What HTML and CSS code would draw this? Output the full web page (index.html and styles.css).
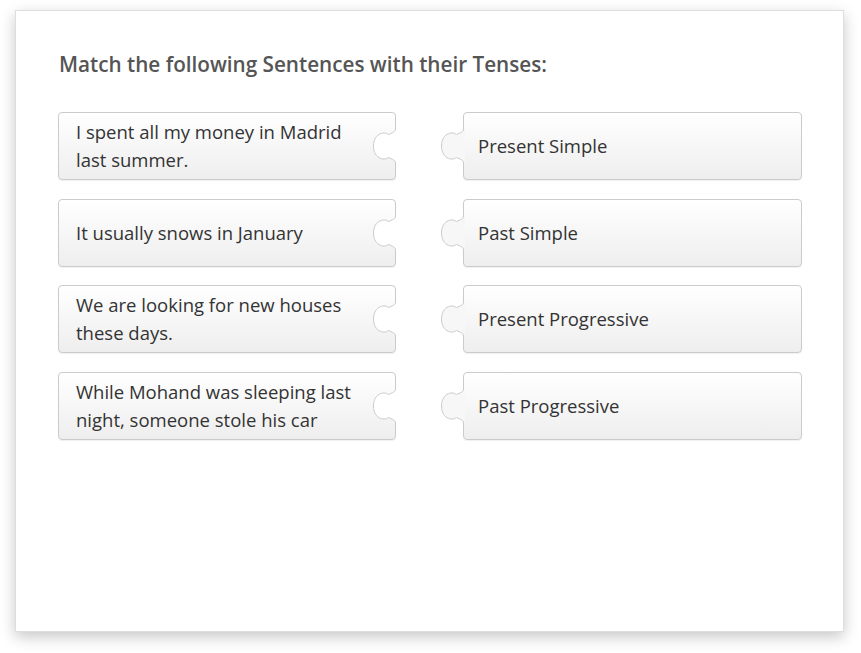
FILE: index.html
```html
<!DOCTYPE html>
<html lang="en">
<head>
<meta charset="utf-8">
<title>Match</title>
<link rel="stylesheet" href="styles.css">
</head>
<body>
<div class="frame">
  <h1 class="title">Match the following Sentences with their Tenses:</h1>
  <div class="grid">
    <div class="piece left"><span>I spent all my money in Madrid last summer.</span>
      <svg class="notch" width="24" height="40" viewBox="-23.5 -20 24 40"><path class="cut" d="M0,-17 C0,-13 -6,-13 -7,-11 C-9,-15 -22,-14 -22,0 C-22,14 -9,15 -7,11 C-6,13 0,13 0,17 L1,17 L1,-17 Z"/><path class="edge" d="M0,-17 C0,-13 -6,-13 -7,-11 C-9,-15 -22,-14 -22,0 C-22,14 -9,15 -7,11 C-6,13 0,13 0,17"/></svg>
    </div>
    <div class="piece right"><span>Present Simple</span>
      <svg class="tab" width="24" height="40" viewBox="-22.5 -20 24 40"><path class="fill" d="M0,-17 C0,-13 -6,-13 -7,-11 C-9,-15 -22,-14 -22,0 C-22,14 -9,15 -7,11 C-6,13 0,13 0,17 L1.5,17 L1.5,-17 Z"/><path class="edge" d="M0,-17 C0,-13 -6,-13 -7,-11 C-9,-15 -22,-14 -22,0 C-22,14 -9,15 -7,11 C-6,13 0,13 0,17"/></svg>
    </div>

    <div class="piece left"><span>It usually snows in January</span>
      <svg class="notch" width="24" height="40" viewBox="-23.5 -20 24 40"><path class="cut" d="M0,-17 C0,-13 -6,-13 -7,-11 C-9,-15 -22,-14 -22,0 C-22,14 -9,15 -7,11 C-6,13 0,13 0,17 L1,17 L1,-17 Z"/><path class="edge" d="M0,-17 C0,-13 -6,-13 -7,-11 C-9,-15 -22,-14 -22,0 C-22,14 -9,15 -7,11 C-6,13 0,13 0,17"/></svg>
    </div>
    <div class="piece right"><span>Past Simple</span>
      <svg class="tab" width="24" height="40" viewBox="-22.5 -20 24 40"><path class="fill" d="M0,-17 C0,-13 -6,-13 -7,-11 C-9,-15 -22,-14 -22,0 C-22,14 -9,15 -7,11 C-6,13 0,13 0,17 L1.5,17 L1.5,-17 Z"/><path class="edge" d="M0,-17 C0,-13 -6,-13 -7,-11 C-9,-15 -22,-14 -22,0 C-22,14 -9,15 -7,11 C-6,13 0,13 0,17"/></svg>
    </div>

    <div class="piece left"><span>We are looking for new houses these days.</span>
      <svg class="notch" width="24" height="40" viewBox="-23.5 -20 24 40"><path class="cut" d="M0,-17 C0,-13 -6,-13 -7,-11 C-9,-15 -22,-14 -22,0 C-22,14 -9,15 -7,11 C-6,13 0,13 0,17 L1,17 L1,-17 Z"/><path class="edge" d="M0,-17 C0,-13 -6,-13 -7,-11 C-9,-15 -22,-14 -22,0 C-22,14 -9,15 -7,11 C-6,13 0,13 0,17"/></svg>
    </div>
    <div class="piece right"><span>Present Progressive</span>
      <svg class="tab" width="24" height="40" viewBox="-22.5 -20 24 40"><path class="fill" d="M0,-17 C0,-13 -6,-13 -7,-11 C-9,-15 -22,-14 -22,0 C-22,14 -9,15 -7,11 C-6,13 0,13 0,17 L1.5,17 L1.5,-17 Z"/><path class="edge" d="M0,-17 C0,-13 -6,-13 -7,-11 C-9,-15 -22,-14 -22,0 C-22,14 -9,15 -7,11 C-6,13 0,13 0,17"/></svg>
    </div>

    <div class="piece left"><span>While Mohand was sleeping last night, someone stole his car</span>
      <svg class="notch" width="24" height="40" viewBox="-23.5 -20 24 40"><path class="cut" d="M0,-17 C0,-13 -6,-13 -7,-11 C-9,-15 -22,-14 -22,0 C-22,14 -9,15 -7,11 C-6,13 0,13 0,17 L1,17 L1,-17 Z"/><path class="edge" d="M0,-17 C0,-13 -6,-13 -7,-11 C-9,-15 -22,-14 -22,0 C-22,14 -9,15 -7,11 C-6,13 0,13 0,17"/></svg>
    </div>
    <div class="piece right"><span>Past Progressive</span>
      <svg class="tab" width="24" height="40" viewBox="-22.5 -20 24 40"><path class="fill" d="M0,-17 C0,-13 -6,-13 -7,-11 C-9,-15 -22,-14 -22,0 C-22,14 -9,15 -7,11 C-6,13 0,13 0,17 L1.5,17 L1.5,-17 Z"/><path class="edge" d="M0,-17 C0,-13 -6,-13 -7,-11 C-9,-15 -22,-14 -22,0 C-22,14 -9,15 -7,11 C-6,13 0,13 0,17"/></svg>
    </div>
  </div>
</div>
</body>
</html>
```

FILE: styles.css
```css
html, body {
  margin: 0;
  padding: 0;
  background: #ffffff;
}
body {
  padding: 10px 17px 21px 15px;
  font-family: "Open Sans", "DejaVu Sans", sans-serif;
}
.frame {
  box-sizing: border-box;
  width: 829px;
  height: 622px;
  background: #ffffff;
  border: 1px solid #dedede;
  box-shadow: 0 5px 14px rgba(0, 0, 0, 0.22);
  padding: 39px 0 0 41px;
}
.title {
  margin: 0 0 34px 2px;
  font-size: 20.7px;
  line-height: 28px;
  font-weight: 600;
  color: #555555;
}
.grid {
  display: grid;
  grid-template-columns: 338px 339px;
  column-gap: 67px;
  row-gap: 18.67px;
  margin-left: 1px;
}
.piece {
  position: relative;
  box-sizing: border-box;
  height: 68px;
  border: 1px solid #cbcbcb;
  border-radius: 4px;
  background: linear-gradient(#ffffff, #eeeeee);
  box-shadow: 0 1px 1px rgba(0, 0, 0, 0.06);
  display: flex;
  align-items: center;
  font-size: 18.5px;
  line-height: 28px;
  color: #333333;
}
.piece.left {
  padding: 0 36px 0 17px;
}
.piece.right {
  padding: 0 20px 0 14px;
}
.piece svg {
  position: absolute;
  top: calc(50% - 20px);
  overflow: visible;
}
.notch {
  right: -1px;
}
.tab {
  left: -23px;
}
.cut {
  fill: #ffffff;
}
.fill {
  fill: #f7f7f7;
}
.edge {
  fill: none;
  stroke: #cbcbcb;
  stroke-width: 1;
}
```
